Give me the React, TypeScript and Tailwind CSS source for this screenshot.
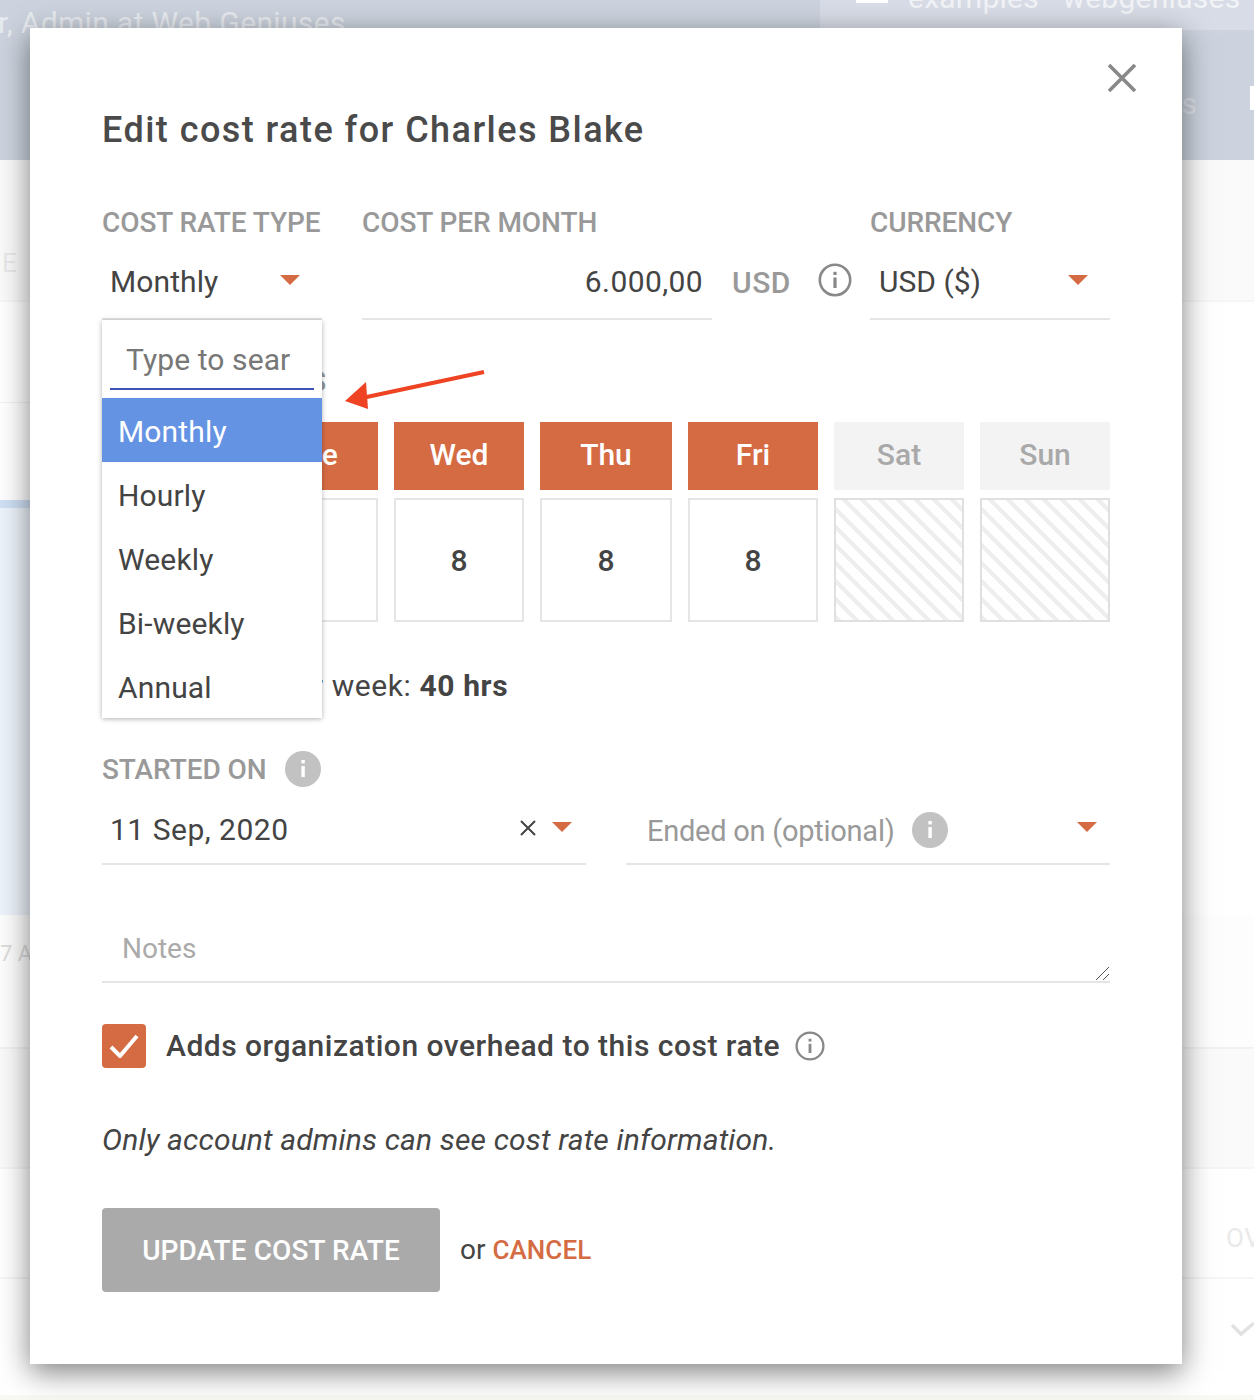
const dayCols = [
  { name: "Mon", hours: "8", on: true },
  { name: "Tue", hours: "8", on: true },
  { name: "Wed", hours: "8", on: true },
  { name: "Thu", hours: "8", on: true },
  { name: "Fri", hours: "8", on: true },
  { name: "Sat", hours: "", on: false },
  { name: "Sun", hours: "", on: false },
];

const rateTypes = ["Monthly", "Hourly", "Weekly", "Bi-weekly", "Annual"];

function Caret() {
  return <span className="block h-0 w-0 border-x-[10px] border-t-[10px] border-x-transparent border-t-[#d56b43]" />;
}

function InfoOutline({ size }: { size: number }) {
  return (
    <svg width={size} height={size} viewBox="0 0 34 34" fill="none" className="shrink-0">
      <circle cx="17" cy="17" r="15.2" stroke="#888888" strokeWidth="2.6" />
      <rect x="15.4" y="14.5" width="3.2" height="10.5" fill="#888888" />
      <rect x="15.4" y="8.8" width="3.2" height="3.2" fill="#888888" />
    </svg>
  );
}

function InfoFilled() {
  return (
    <svg width="36" height="36" viewBox="0 0 36 36" className="-mt-[2px] shrink-0">
      <ellipse cx="18" cy="18" rx="18" ry="18" fill="#c2c2c2" />
      <rect x="16.4" y="15" width="3.4" height="11" fill="#ffffff" />
      <rect x="16.4" y="9" width="3.4" height="3.4" fill="#ffffff" />
    </svg>
  );
}

function Label({ children }: { children: React.ReactNode }) {
  return <div className="text-[28px] leading-[36px] font-medium tracking-[-0.08px] text-[#999999]">{children}</div>;
}

function Background() {
  return (
    <div className="h-[1400px] overflow-hidden bg-white text-[#e9e9e9]">
      <div className="h-[160px] bg-[#ccd3de]">
        <div className="flex h-[30px] justify-between">
          <div className="-ml-[2px] text-[30px] leading-[46px] tracking-[0.35px] text-[#e8ebf0]">r, Admin at Web Geniuses</div>
          <div className="flex h-[30px] w-[434px] items-start gap-5 bg-[#d8dce6] pl-9">
            <span className="-mt-[1px] block h-[4px] w-[32px] bg-white" />
            <span className="-mt-[22px] text-[30px] leading-[40px] tracking-[0.25px] text-[#f2f3f6]">examples · webgeniuses</span>
          </div>
        </div>
        <div className="flex justify-end gap-[53px] pt-[56px] text-[30px] leading-[36px] text-[#dfe3ea]">
          <span>s</span>
          <span className="h-[24px] w-[4px] bg-white" />
        </div>
      </div>
      <div className="h-[142px] border-b-2 border-[#f6f6f6] bg-[#fafafa] pt-[88px] pl-[2px] text-[26px] leading-[30px]">E</div>
      <div className="h-[198px] bg-white pt-[100px]">
        <div className="h-px w-[30px] bg-[#f2f2f2]" />
      </div>
      <div className="h-[415px] w-[30px] border-t-[8px] border-[#cfe0f5] bg-[#edf3fb]" />
      <div className="h-[132px] bg-[#fdfdfd] pt-[24px] text-[22px] leading-[30px] text-[#dcdcdc]">7 A</div>
      <div className="h-[120px] border-t-2 border-[#f2f2f2] bg-[#fafafa]" />
      <div className="flex h-[110px] justify-end overflow-hidden border-t-2 border-[#f5f5f5] bg-white pt-[54px] text-[26px] leading-[30px] tracking-wide">
        <span className="w-[28px] whitespace-nowrap">OV</span>
      </div>
      <div className="flex h-[118px] justify-end border-t-2 border-[#f5f5f5] pt-[42px]">
        <svg width="24" height="20" viewBox="0 0 24 20" fill="none">
          <path d="M2 4 L11 13 L24 2" stroke="#e2e2e2" strokeWidth="3.5" />
        </svg>
      </div>
      <div className="h-[5px] bg-[#f9f9f3]" />
    </div>
  );
}

export default function App() {
  return (
    <div className="relative h-[1400px] w-[1254px] overflow-hidden font-[Roboto,sans-serif] text-[#444444]">
      <Background />

      {/* modal */}
      <div className="absolute left-[30px] top-[28px] h-[1336px] w-[1152px] bg-white px-[72px] pt-[80px] shadow-[0_8px_28px_rgba(0,0,0,0.5)]">
        <button className="absolute right-[46px] top-[36px]">
          <svg width="28" height="28" viewBox="0 0 28 28" fill="none" className="block">
            <path d="M1 1 L27 27 M27 1 L1 27" stroke="#888888" strokeWidth="3.6" />
          </svg>
        </button>

        <h1 className="text-[36px] leading-[44px] font-medium tracking-[1.45px] text-[#4a4a4a]">Edit cost rate for Charles Blake</h1>

        {/* rate row */}
        <div className="mt-[53px] flex">
          <div className="w-[220px]">
            <Label>COST RATE TYPE</Label>
            <div className="mt-[4px] flex h-[75px] items-center justify-between border-b-2 border-[#e5e5e5] pl-2 pr-[22px] pt-[1px]">
              <span className="text-[30px] leading-[40px] tracking-[0.1px]">Monthly</span>
              <span className="-mt-[5px]"><Caret /></span>
            </div>
          </div>
          <div className="ml-[40px] w-[350px]">
            <Label>COST PER MONTH</Label>
            <div className="mt-[4px] flex h-[75px] items-center justify-end border-b-2 border-[#e5e5e5] pr-[9px] pt-[1px] text-[30px] leading-[40px] tracking-[0.4px]">6.000,00</div>
          </div>
          <div className="ml-[20px] flex h-[114px] w-[138px] items-end gap-[27px] pb-[16px]">
            <span className="text-[30px] leading-[40px] font-medium tracking-[0.5px] text-[#999999]">USD</span>
            <span className="pb-[6px]"><InfoOutline size={34} /></span>
          </div>
          <div className="w-[240px]">
            <Label>CURRENCY</Label>
            <div className="mt-[4px] flex h-[75px] items-center justify-between border-b-2 border-[#e5e5e5] pl-[9px] pr-[22px] pt-[1px]">
              <span className="text-[30px] leading-[40px]">USD ($)</span>
              <span className="-mt-[5px]"><Caret /></span>
            </div>
          </div>
        </div>

        {/* work days */}
        <div className="mt-[44px]">
          <Label>WORKING HOURS</Label>
          <div className="mt-[22px] grid grid-cols-[130px_130px_130px_132px_130px_130px_130px] gap-x-4 gap-y-2">
            {dayCols.map((d) => (
              <div
                key={d.name}
                className={
                  d.on
                    ? "flex h-[68px] items-center justify-center bg-[#d56b43] pb-[3px] text-[30px] font-medium text-white"
                    : "flex h-[68px] items-center justify-center bg-[#f3f3f3] pb-[3px] text-[30px] font-medium text-[#a9a9a9]"
                }
              >
                {d.name}
              </div>
            ))}
            {dayCols.map((d) =>
              d.on ? (
                <div key={d.name} className="flex h-[124px] items-center justify-center border-2 border-[#e5e5e5] text-[30px] font-medium">
                  {d.hours}
                </div>
              ) : (
                <div
                  key={d.name}
                  className="h-[124px] border-2 border-[#e0e0e0] bg-[repeating-linear-gradient(45deg,#eeeeee_0,#eeeeee_4px,#ffffff_4px,#ffffff_12.7px)]"
                />
              ),
            )}
          </div>
          <div className="ml-[12px] mt-[44px] text-[30px] leading-[40px] tracking-[0.6px]">
            Total hours per week: <b className="font-bold">40 hrs</b>
          </div>
        </div>

        {/* dates */}
        <div className="mt-[42px] grid grid-cols-2 gap-x-10">
          <div>
            <div className="flex h-[44px] items-center gap-[19px]">
              <Label>STARTED ON</Label>
              <InfoFilled />
            </div>
            <div className="mt-[9px] flex h-[64px] items-center justify-between border-b-2 border-[#e5e5e5] pb-[4px] pl-2 pr-[14px]">
              <span className="text-[30px] leading-[40px] tracking-[0.5px]">11 Sep, 2020</span>
              <span className="flex items-center gap-[15px]">
                <svg width="18" height="18" viewBox="0 0 18 18" fill="none" className="-mt-[4px] -ml-[1px]">
                  <path d="M2 2 L16 16 M16 2 L2 16" stroke="#444444" strokeWidth="2" />
                </svg>
                <span className="-mt-[6px]"><Caret /></span>
              </span>
            </div>
          </div>
          <div className="pt-[53px]">
            <div className="flex h-[64px] items-center justify-between border-b-2 border-[#e5e5e5] pb-[2px] pl-[21px] pr-[13px]">
              <span className="flex items-center gap-[17px]">
                <span className="text-[29px] leading-[40px] tracking-[-0.25px] text-[#999999]">Ended on (optional)</span>
                <InfoFilled />
              </span>
              <span className="-mt-[8px]"><Caret /></span>
            </div>
          </div>
        </div>

        {/* notes */}
        <div className="relative mt-[50px] flex h-[68px] items-start border-b-2 border-[#e5e5e5] pl-5 pt-[14px] text-[28px] leading-[40px] text-[#aaaaaa]">
          Notes
          <svg width="14" height="14" viewBox="0 0 14 14" fill="none" className="absolute bottom-[1px] right-[1px]">
            <path d="M1 14 L14 1 M8 14 L14 8" stroke="#555555" strokeWidth="1" />
          </svg>
        </div>

        {/* overhead */}
        <div className="mt-[41px] flex items-center">
          <span className="flex h-[44px] w-[44px] items-center justify-center rounded-[4px] bg-[#d56b43]">
            <svg width="30" height="24" viewBox="0 0 30 24" fill="none">
              <path d="M2 13 L11 22 L28 2" stroke="#ffffff" strokeWidth="4" />
            </svg>
          </span>
          <span className="ml-5 text-[30px] leading-[40px] font-medium tracking-[0.5px]">Adds organization overhead to this cost rate</span>
          <span className="ml-[15px]"><InfoOutline size={30} /></span>
        </div>

        <p className="mt-[52px] text-[30px] leading-[40px] italic tracking-[0.16px]">Only account admins can see cost rate information.</p>

        <div className="mt-[48px] flex items-center">
          <button className="flex h-[84px] w-[338px] items-center justify-center rounded-[4px] bg-[#aaaaaa] pt-[1px] text-[28px] font-medium tracking-[0.1px] text-white">
            UPDATE COST RATE
          </button>
          <span className="ml-5 text-[28px] leading-[40px]">
            or <span className="text-[26px] font-medium tracking-[0.1px] text-[#d56b43]">CANCEL</span>
          </span>
        </div>

        {/* dropdown */}
        <div className="absolute left-[72px] top-[292px] w-[220px] bg-white shadow-[0_1px_5px_rgba(0,0,0,0.3)]">
          <div className="mx-2 flex h-[70px] items-end border-b-2 border-[#3f51b5] pb-[8px] pl-4 text-[30px] leading-[40px] tracking-[0.1px] text-[#777777]">
            <span className="overflow-hidden whitespace-nowrap">Type to sear</span>
          </div>
          <ul className="mt-2">
            {rateTypes.map((t, i) => (
              <li
                key={t}
                className={
                  i === 0
                    ? "flex h-[64px] items-center bg-[#6593e3] pl-4 pt-[2px] text-[30px] tracking-[0.15px] text-white"
                    : "flex h-[64px] items-center pl-4 pt-[2px] text-[30px] tracking-[0.15px]"
                }
              >
                {t}
              </li>
            ))}
          </ul>
        </div>

        {/* annotation arrow */}
        <svg width="144" height="44" viewBox="0 0 144 44" fill="none" className="absolute left-[312px] top-[340px]">
          <path d="M142 4 L20 30" stroke="#ee4423" strokeWidth="4" />
          <path d="M3 33 L24 14 L26 41 Z" fill="#ee4423" />
        </svg>
      </div>
    </div>
  );
}
